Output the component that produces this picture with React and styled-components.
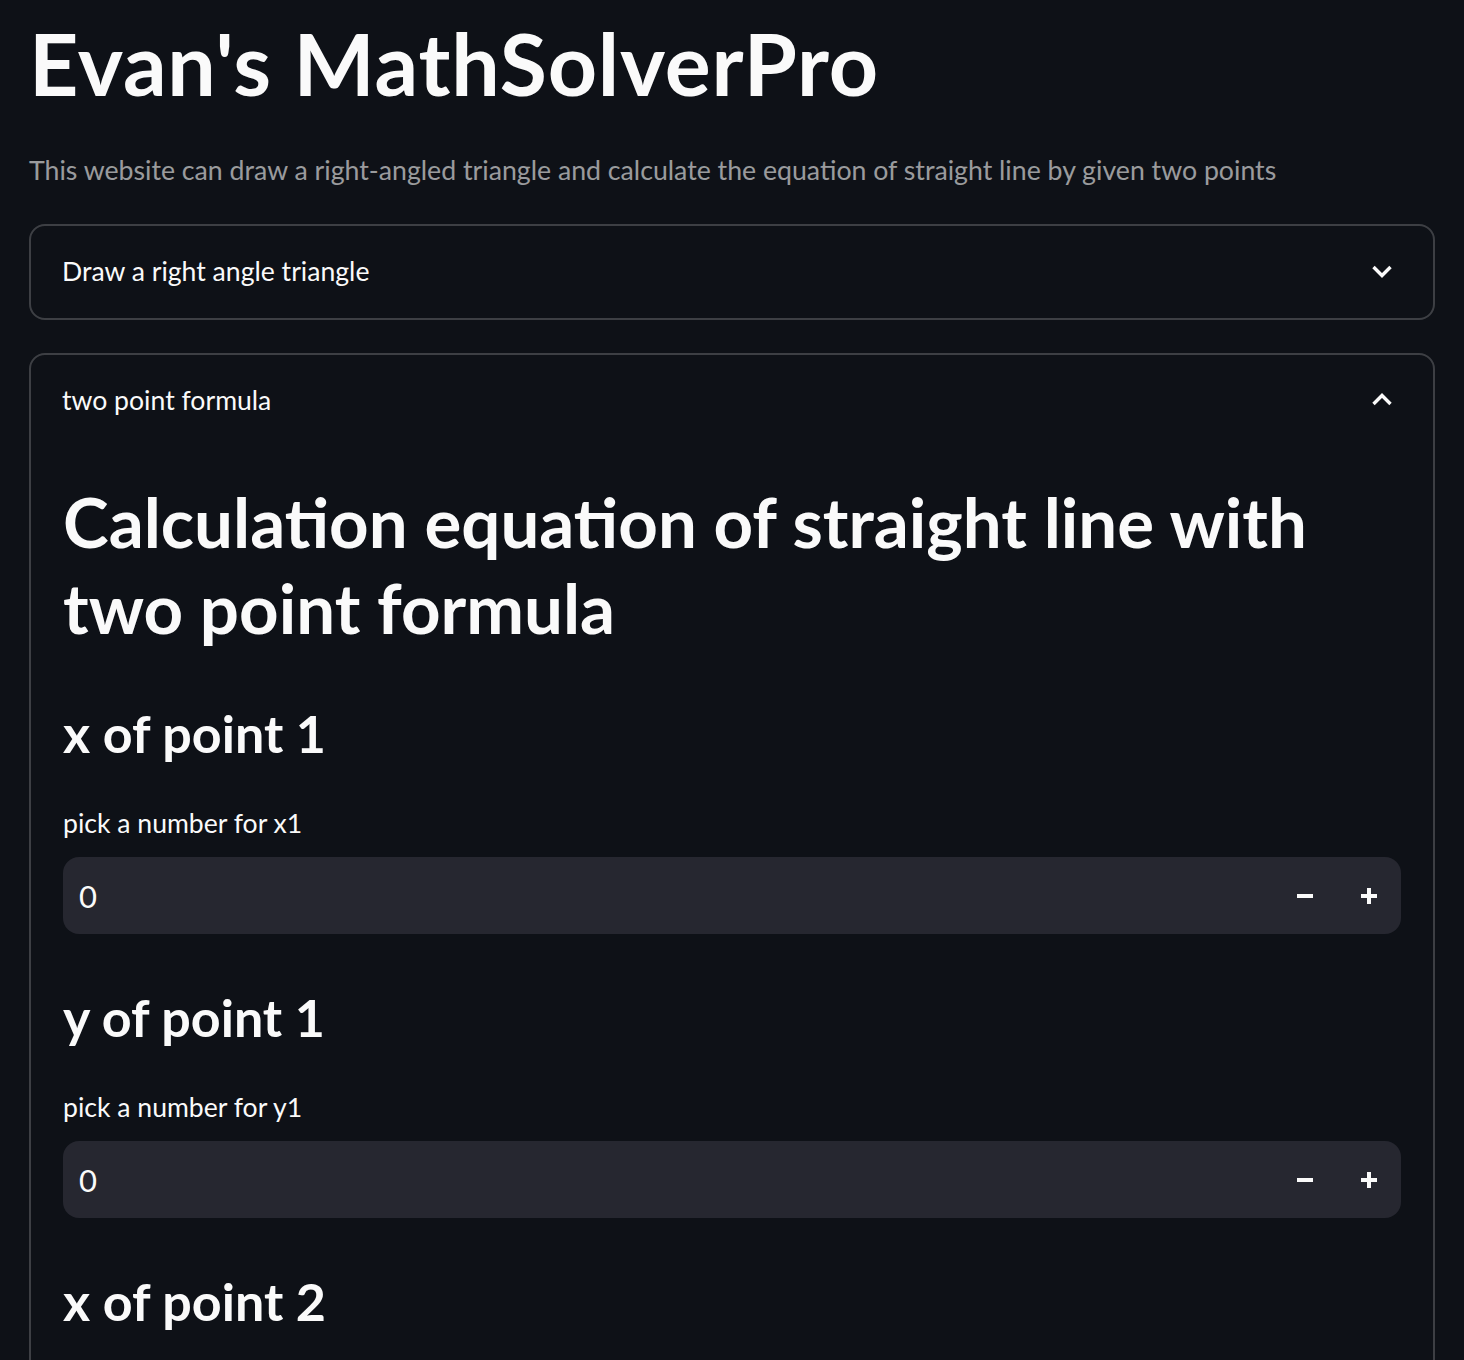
import React from 'react';
import styled, { createGlobalStyle } from 'styled-components';

const GlobalStyle = createGlobalStyle`
    html, body {
        margin: 0;
        background: #0e1117;
    }
    body {
        font-family: Lato, "Noto Sans", sans-serif;
        color: #fafafa;
    }
`;

const Page = styled.main`
    display: flex;
    flex-direction: column;
    padding: 10px 29px 40px;
`;

const Title = styled.h1`
    margin: 0;
    font-size: 86px;
    font-weight: 700;
    letter-spacing: 0.8px;
    line-height: 106px;
`;

const Subtitle = styled.p`
    margin: 35px 0 35px;
    font-size: 26.7px;
    line-height: 38px;
    color: rgba(250, 250, 250, 0.6);
`;

const Expander = styled.section`
    border: 2px solid rgba(250, 250, 250, 0.2);
    border-radius: 16px;
    & + & {
        margin-top: 33px;
    }
`;

const ExpanderHeader = styled.div`
    display: flex;
    align-items: center;
    justify-content: space-between;
    height: 92px;
    padding: 0 37px 2px 31px;
    box-sizing: border-box;
    font-size: 26.6px;
`;

const ExpanderBody = styled.div`
    display: flex;
    flex-direction: column;
    gap: 50px;
    padding: 32px 32px 40px;
`;

const Heading = styled.h2`
    margin: 0;
    font-size: 69px;
    font-weight: 700;
    line-height: 86px;
`;

const Field = styled.div`
    display: flex;
    flex-direction: column;
    padding-bottom: 1px;
`;

const FieldTitle = styled.h3`
    margin: 0 0 2px;
    font-size: 52px;
    font-weight: 700;
    line-height: 64px;
`;

const FieldLabel = styled.label`
    margin-top: 37px;
    font-size: 26.6px;
    line-height: 38px;
`;

const NumberBox = styled.div`
    display: flex;
    align-items: center;
    height: 77px;
    margin-top: 15px;
    border-radius: 16px;
    background: #262730;
`;

const NumberValue = styled.input`
    flex: 1;
    min-width: 0;
    height: 100%;
    padding: 0 16px;
    border: none;
    outline: none;
    background: transparent;
    color: #fafafa;
    font-family: inherit;
    font-size: 31px;
`;

const StepButton = styled.button`
    display: flex;
    align-items: center;
    justify-content: center;
    width: 64px;
    height: 100%;
    padding: 0;
    border: none;
    background: transparent;
    color: #fafafa;
    cursor: pointer;
`;

function Chevron({ up }) {
    return (
        <svg width="28" height="28" viewBox="0 0 28 28" fill="none">
            <polyline
                points={up ? '5.5,18 14,9.5 22.5,18' : '5.5,10 14,18.5 22.5,10'}
                stroke="#fafafa"
                strokeWidth="3.4"
            />
        </svg>
    );
}

function Minus() {
    return (
        <svg width="16" height="16" viewBox="0 0 16 16">
            <rect x="0" y="6" width="16" height="4" fill="currentColor" />
        </svg>
    );
}

function Plus() {
    return (
        <svg width="16" height="16" viewBox="0 0 16 16">
            <rect x="0" y="6" width="16" height="4" fill="currentColor" />
            <rect x="6" y="0" width="4" height="16" fill="currentColor" />
        </svg>
    );
}

const fields = [
    { title: 'x of point 1', label: 'pick a number for x1' },
    { title: 'y of point 1', label: 'pick a number for y1' },
    { title: 'x of point 2', label: 'pick a number for x2' },
    { title: 'y of point 2', label: 'pick a number for y2' },
];

function App() {
    return (
        <>
            <GlobalStyle />
            <Page>
                <Title>Evan's MathSolverPro</Title>
                <Subtitle>
                    This website can draw a right-angled triangle and calculate the equation of straight line by given two points
                </Subtitle>
                <Expander>
                    <ExpanderHeader>
                        <span>Draw a right angle triangle</span>
                        <Chevron />
                    </ExpanderHeader>
                </Expander>
                <Expander>
                    <ExpanderHeader>
                        <span>two point formula</span>
                        <Chevron up />
                    </ExpanderHeader>
                    <ExpanderBody>
                        <Heading>Calculation equation of straight line with two point formula</Heading>
                        {fields.map((f) => (
                            <Field key={f.title}>
                                <FieldTitle>{f.title}</FieldTitle>
                                <FieldLabel>{f.label}</FieldLabel>
                                <NumberBox>
                                    <NumberValue type="text" defaultValue="0" />
                                    <StepButton aria-label="decrement"><Minus /></StepButton>
                                    <StepButton aria-label="increment"><Plus /></StepButton>
                                </NumberBox>
                            </Field>
                        ))}
                    </ExpanderBody>
                </Expander>
            </Page>
        </>
    );
}

export default App;
